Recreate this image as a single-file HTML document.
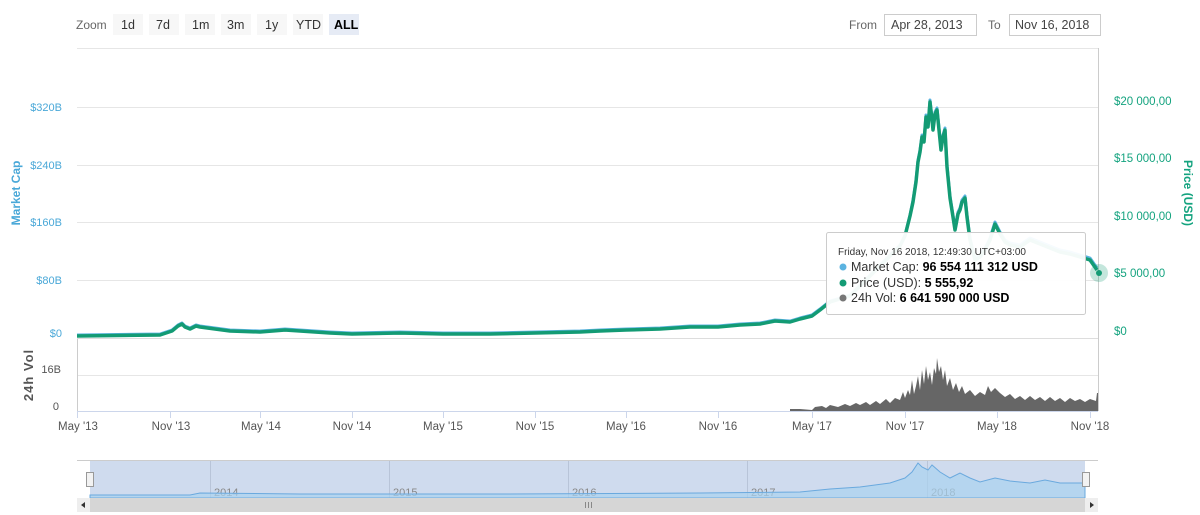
<!DOCTYPE html>
<html><head><meta charset="utf-8"><style>
body{margin:0;background:#fff;width:1200px;height:515px;overflow:hidden;font-family:"Liberation Sans",sans-serif;}
svg{position:absolute;left:0;top:0}
</style></head><body>
<svg width="1200" height="515" viewBox="0 0 1200 515" font-family="Liberation Sans, sans-serif">
<text x="76" y="29" font-size="12" fill="#666">Zoom</text>
<g font-size="12.5" fill="#333">
<rect x="113" y="14" width="30" height="21" fill="#f7f7f7"/><text x="121" y="29">1d</text>
<rect x="149" y="14" width="30" height="21" fill="#f7f7f7"/><text x="156" y="29">7d</text>
<rect x="185" y="14" width="30" height="21" fill="#f7f7f7"/><text x="192" y="29">1m</text>
<rect x="221" y="14" width="30" height="21" fill="#f7f7f7"/><text x="227" y="29">3m</text>
<rect x="257" y="14" width="30" height="21" fill="#f7f7f7"/><text x="265" y="29">1y</text>
<rect x="293" y="14" width="30" height="21" fill="#f7f7f7"/><text x="296" y="29">YTD</text>
<rect x="329" y="14" width="30" height="21" fill="#e6ebf5"/><text x="334" y="29" font-weight="bold" fill="#000">ALL</text>
</g>
<text x="849" y="29" font-size="12" fill="#666">From</text>
<rect x="884.5" y="14.5" width="92" height="21" fill="#fff" stroke="#ccc"/>
<text x="891" y="29" font-size="12.5" fill="#444">Apr 28, 2013</text>
<text x="988" y="29" font-size="12" fill="#666">To</text>
<rect x="1009.5" y="14.5" width="91" height="21" fill="#fff" stroke="#ccc"/>
<text x="1015" y="29" font-size="12.5" fill="#444">Nov 16, 2018</text>

<g stroke="#e6e6e6" stroke-width="1">
<line x1="77" y1="48.5" x2="1098" y2="48.5"/>
<line x1="77" y1="107.5" x2="1098" y2="107.5"/>
<line x1="77" y1="165.5" x2="1098" y2="165.5"/>
<line x1="77" y1="222.5" x2="1098" y2="222.5"/>
<line x1="77" y1="280.5" x2="1098" y2="280.5"/>
<line x1="77" y1="375.5" x2="1098" y2="375.5"/>
</g>
<line x1="1098.5" y1="48" x2="1098.5" y2="411" stroke="#ccc"/>
<line x1="77.5" y1="338" x2="77.5" y2="411" stroke="#ccc"/>
<line x1="77" y1="338.5" x2="1098" y2="338.5" stroke="#ddd"/>
<line x1="77" y1="411.5" x2="1098" y2="411.5" stroke="#ccd6eb"/>
<g stroke="#ccd6eb"><line x1="77.5" y1="411" x2="77.5" y2="418"/><line x1="170.5" y1="411" x2="170.5" y2="418"/><line x1="260.5" y1="411" x2="260.5" y2="418"/><line x1="352.5" y1="411" x2="352.5" y2="418"/><line x1="443.5" y1="411" x2="443.5" y2="418"/><line x1="535.5" y1="411" x2="535.5" y2="418"/><line x1="626.5" y1="411" x2="626.5" y2="418"/><line x1="718.5" y1="411" x2="718.5" y2="418"/><line x1="812.5" y1="411" x2="812.5" y2="418"/><line x1="905.5" y1="411" x2="905.5" y2="418"/><line x1="997.5" y1="411" x2="997.5" y2="418"/><line x1="1090.5" y1="411" x2="1090.5" y2="418"/></g>

<g font-size="11" fill="#4aa8d8" text-anchor="end">
<text x="62" y="111">$320B</text><text x="62" y="169">$240B</text><text x="62" y="226">$160B</text><text x="62" y="284">$80B</text><text x="62" y="337">$0</text>
</g>
<text transform="translate(20,193) rotate(-90)" font-size="12" font-weight="bold" fill="#4aa8d8" text-anchor="middle">Market Cap</text>
<g font-size="11" fill="#555" text-anchor="end"><text x="61" y="373">16B</text><text x="59" y="410">0</text></g>
<text transform="translate(33,375) rotate(-90)" font-size="13" font-weight="bold" fill="#555" text-anchor="middle" letter-spacing="1">24h Vol</text>
<g font-size="11.5" fill="#14a37f">
<text x="1114" y="105">$20 000,00</text><text x="1114" y="162">$15 000,00</text><text x="1114" y="220">$10 000,00</text><text x="1114" y="277">$5 000,00</text><text x="1114" y="335">$0</text>
</g>
<text transform="translate(1184,193) rotate(90)" font-size="12" font-weight="bold" fill="#14a37f" text-anchor="middle">Price (USD)</text>

<g font-size="11.5" fill="#555" text-anchor="middle">
<text x="78" y="430">May '13</text><text x="171" y="430">Nov '13</text><text x="261" y="430">May '14</text><text x="352" y="430">Nov '14</text><text x="443" y="430">May '15</text><text x="535" y="430">Nov '15</text><text x="626" y="430">May '16</text><text x="718" y="430">Nov '16</text><text x="812" y="430">May '17</text><text x="905" y="430">Nov '17</text><text x="997" y="430">May '18</text><text x="1090" y="430">Nov '18</text>
</g>

<path fill="#666" d="M790 411 L790 409 L800 409 L812 410 L815 407 L822 406 L826 408 L830 405 L838 407 L845 404 L850 406 L856 403 L860 405 L866 402 L870 405 L876 401 L880 404 L886 399 L890 403 L895 398 L900 400 L903 392 L905 398 L908 390 L910 395 L912 380 L914 394 L916 386 L918 376 L920 390 L922 370 L924 384 L926 366 L928 380 L930 372 L932 385 L934 368 L936 374 L937 358 L939 372 L941 366 L943 380 L945 370 L947 386 L950 378 L953 390 L956 383 L959 392 L962 386 L965 394 L970 390 L975 396 L980 392 L985 395 L988 386 L991 392 L995 388 L1000 393 L1005 397 L1010 394 L1015 399 L1020 396 L1025 400 L1030 396 L1035 400 L1040 397 L1045 401 L1050 397 L1055 401 L1060 398 L1065 402 L1070 398 L1075 401 L1080 399 L1085 402 L1090 399 L1096 401 L1097 393 L1098 393 L1098 411 Z"/>

<polyline fill="none" stroke="#5bb3e0" stroke-width="3" stroke-linejoin="round" points="77,335 160,334 172,330 178,325 182,323 185,326 190,328 196,325 200,326 215,328 230,330 260,331 285,329 300,330 330,332 352,333 400,332 443,333 490,333 535,332 580,331 600,330 626,329 660,328 690,326 718,326 740,324 760,323 775,320 790,321 800,318 812,315 820,309 830,301 850,295 870,275 890,255 900,245 905,235 910,215 913,200 916,180 918,160 920,150 922,135 924,140 926,115 928,125 930,100 932,118 933,128 935,112 937,108 939,128 941,148 943,135 945,128 947,165 950,196 953,215 955,228 958,212 960,208 962,200 965,196 967,215 970,238 973,250 975,258 980,255 985,248 990,238 995,222 998,228 1000,232 1005,240 1010,243 1020,245 1030,238 1040,242 1050,246 1060,250 1070,252 1080,255 1090,258 1097,268"/>
<polyline fill="none" stroke="#139b74" stroke-width="3.5" stroke-linejoin="round" points="77,336 160,335 172,331 178,326 182,324 185,327 190,329 196,326 200,327 215,329 230,331 260,332 285,330 300,331 330,333 352,334 400,333 443,334 490,334 535,333 580,332 600,331 626,330 660,329 690,327 718,327 740,325 760,324 775,321 790,322 800,319 812,316 820,310 830,302 850,296 870,276 890,256 900,246 905,236 910,216 913,202 916,182 918,162 920,152 922,137 924,142 926,117 928,127 930,102 932,120 933,130 935,114 937,110 939,130 941,150 943,137 945,130 947,167 950,198 953,217 955,230 958,214 960,210 962,202 965,198 967,217 970,240 973,252 975,260 980,257 985,250 990,240 995,224 998,230 1000,234 1005,242 1010,245 1020,247 1030,240 1040,244 1050,248 1060,252 1070,254 1080,257 1090,260 1097,270"/>
<circle cx="1099" cy="273" r="9" fill="#139b74" opacity="0.25"/>
<circle cx="1099" cy="273" r="3" fill="#139b74"/>

<rect x="826.5" y="232.5" width="259" height="82" fill="#fff" fill-opacity="0.95" stroke="#ccc" rx="2"/>
<text x="838" y="255" font-size="10" fill="#333">Friday, Nov 16 2018, 12:49:30 UTC+03:00</text>
<circle cx="843" cy="267" r="3.5" fill="#5bb3e0"/><text x="851" y="271" font-size="12.5" fill="#333">Market Cap: <tspan font-weight="bold" fill="#000">96 554 111 312 USD</tspan></text>
<circle cx="843" cy="283" r="3.5" fill="#139b74"/><text x="851" y="287" font-size="12.5" fill="#333">Price (USD): <tspan font-weight="bold" fill="#000">5 555,92</tspan></text>
<circle cx="843" cy="298" r="3.5" fill="#777"/><text x="851" y="302" font-size="12.5" fill="#333">24h Vol: <tspan font-weight="bold" fill="#000">6 641 590 000 USD</tspan></text>

<line x1="77" y1="460.5" x2="1098" y2="460.5" stroke="#ccc"/>
<rect x="90" y="461" width="995" height="37" fill="#cfdbee"/>
<g stroke="#b8c4d8"><line x1="210.5" y1="461" x2="210.5" y2="498"/><line x1="389.5" y1="461" x2="389.5" y2="498"/><line x1="568.5" y1="461" x2="568.5" y2="498"/><line x1="747.5" y1="461" x2="747.5" y2="498"/><line x1="927.5" y1="461" x2="927.5" y2="498"/></g>
<g font-size="11" fill="#888"><text x="214" y="496">2014</text><text x="393" y="496">2015</text><text x="572" y="496">2016</text><text x="751" y="496">2017</text><text x="931" y="496">2018</text></g>
<path fill="#a9d3f0" fill-opacity="0.7" stroke="#6aa9de" stroke-width="1" d="M90 495 L190 495 L200 493 L300 494 L500 494 L700 493 L800 492 L830 489 L860 487 L890 483 L905 478 L912 472 L918 463 L922 467 L928 470 L932 465 L940 472 L950 478 L960 473 L970 478 L980 482 L995 478 L1010 481 L1030 483 L1045 480 L1060 483 L1085 483 L1085 498 L90 498 Z"/>
<rect x="86.5" y="472.5" width="7" height="14" fill="#f2f2f2" stroke="#999"/>
<rect x="1082.5" y="472.5" width="7" height="14" fill="#f2f2f2" stroke="#999"/>
<rect x="77" y="498" width="1021" height="14" fill="#d6d6d6"/>
<rect x="77" y="498" width="13" height="14" fill="#eee"/>
<rect x="1085" y="498" width="13" height="14" fill="#eee"/>
<path d="M85 502 L81 505 L85 508Z M1090 502 L1094 505 L1090 508Z" fill="#333"/>
<g stroke="#888"><line x1="585.5" y1="502" x2="585.5" y2="508"/><line x1="588.5" y1="502" x2="588.5" y2="508"/><line x1="591.5" y1="502" x2="591.5" y2="508"/></g>
</svg>
</body></html>
